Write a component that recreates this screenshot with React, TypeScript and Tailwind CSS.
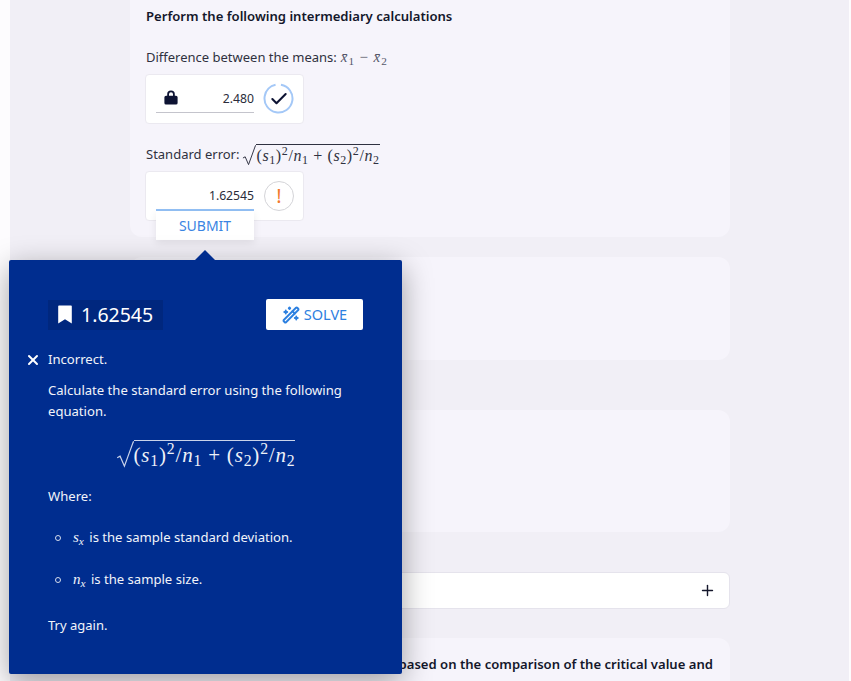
import { Check, Plus, WandSparkles, X } from "lucide-react";

const mathFont = "[font-family:'Liberation_Serif',serif]";

function StdErrorBody() {
  return (
    <span className={mathFont}>
      (<i>s</i><sub>1</sub>)<sup>2</sup>/<i>n</i><sub>1</sub> + (<i>s</i><sub>2</sub>)<sup>2</sup>/<i>n</i><sub>2</sub>
    </span>
  );
}

function StdError({ large }: { large?: boolean }) {
  const stroke = large ? "#c9d3ea" : "#2f3140";
  return (
    <span className="inline-flex items-end">
      <svg width={large ? 18 : 14} height={large ? 27 : 21} viewBox="0 0 15 21" fill="none" className="shrink-0" preserveAspectRatio="none">
        <path d="M1 13 L3.4 11.8 L7 19.6 L14.4 0.6 H15" stroke={stroke} strokeWidth="1" />
      </svg>
      <span
        className={
          large
            ? "border-t border-[#c9d3ea] text-[21px] leading-[26px] tracking-[0.8px] text-[#eef1f8] whitespace-nowrap"
            : "border-t border-[#2f3140] text-[16px] leading-[20px] tracking-[0.6px] text-[#2f3140] whitespace-nowrap"
        }
      >
        <StdErrorBody />
      </span>
    </span>
  );
}

function SolvedInput() {
  return (
    <div className="ml-[-1px] mt-[6px] flex h-[50px] w-[159px] items-start rounded border border-[#ebe9f0] bg-white pl-[10px]">
      <div className="flex h-[38px] w-[98px] items-center justify-between border-b border-[#c4c4cc] pl-[8px] pt-[10px]">
        <svg width="14" height="15" viewBox="0 0 14 16" fill="#0d1333" className="mb-[2px]" preserveAspectRatio="none">
          <path d="M3.2 6V4.4a3.8 3.8 0 0 1 7.6 0V6h1.2A1.6 1.6 0 0 1 13.6 7.6v6.2a1.6 1.6 0 0 1-1.6 1.6H2a1.6 1.6 0 0 1-1.6-1.6V7.6A1.6 1.6 0 0 1 2 6zM5 6h4V4.4a2 2 0 0 0-4 0z" />
        </svg>
        <span className="mt-[1px] text-[12.2px] text-[#2a2c3a]">2.480</span>
      </div>
      <div className="ml-[9px] mt-[8px] flex h-[31px] w-[31px] items-center justify-center">
        <svg width="31" height="31" viewBox="0 0 31 31" fill="none" className="absolute">
          <circle cx="15.5" cy="15.5" r="14" stroke="#a4c8f7" strokeWidth="2" strokeDasharray="82 6" transform="rotate(-80 15.5 15.5)" />
        </svg>
        <Check size={20} strokeWidth={2.5} className="text-[#0d1333]" />
      </div>
    </div>
  );
}

function ActiveInput() {
  return (
    <div className="ml-[-1px] mt-[5px] flex h-[50px] w-[159px] items-start rounded border border-[#ebe9f0] bg-white pl-[10px]">
      <div className="flex h-[39px] w-[98px] items-center justify-end border-b-2 border-[#93c0f5] pt-[11px]">
        <span className="text-[12.2px] text-[#2a2c3a]">1.62545</span>
      </div>
      <div className="ml-[10px] mt-[9px] flex h-[30px] w-[30px] items-center justify-center rounded-full border border-[#d4d4d8]">
        <span className="text-[20px] leading-none text-[#f2792b]">!</span>
      </div>
    </div>
  );
}

function Popover() {
  return (
    <div className="absolute left-[9px] top-[260px] h-[414px] w-[393px] rounded-[2px] bg-[#002d8f] text-[13.1px] text-[#f2f4fa] shadow-[0_8px_30px_rgba(0,0,0,0.36)]">
      <div className="absolute left-[186px] top-[-10px] h-0 w-0 border-x-[10px] border-b-[10px] border-x-transparent border-b-[#002d8f]" />
      <div className="ml-[39px] mr-[39px] mt-[39px] flex items-center justify-between">
        <div className="flex h-[30px] w-[115px] items-center gap-[9px] bg-[#00277e] pl-[10px]">
          <svg width="14" height="19" viewBox="0 0 14 19" fill="white">
            <path d="M1 0.5h12a.8.8 0 0 1 .8.8V18.5L7 14.2 0.2 18.5V1.3A.8.8 0 0 1 1 .5z" />
          </svg>
          <span className="text-[19.5px] leading-none text-white">1.62545</span>
        </div>
        <button className="flex h-[31px] w-[97px] items-center justify-center gap-[4px] rounded-[2px] bg-white text-[14.5px] text-[#2d80e0]">
          <WandSparkles size={18} strokeWidth={2.5} />
          SOLVE
        </button>
      </div>
      <div className="mt-[20px] flex h-[20px] items-center pl-[16px]">
        <X size={16} strokeWidth={3} className="text-white" />
        <span className="ml-[7px]">Incorrect.</span>
      </div>
      <p className="mt-[10px] w-[310px] pl-[39px] leading-[21px] box-content">
        Calculate the standard error using the following equation.
      </p>
      <div className="mt-[18px] flex justify-center">
        <StdError large />
      </div>
      <p className="mt-[18px] pl-[39px] leading-[21px]">Where:</p>
      <ul className="mt-[20px] pl-[46px]">
        <li className="flex h-[21px] items-center">
          <span className="h-[6px] w-[6px] rounded-full border border-[#d6dcec]" />
          <span className="ml-[12px]">
            <i className={`${mathFont} mr-[2px] text-[15px]`}>s<sub>x</sub></i> is the sample standard deviation.
          </span>
        </li>
        <li className="mt-[21px] flex h-[21px] items-center">
          <span className="h-[6px] w-[6px] rounded-full border border-[#d6dcec]" />
          <span className="ml-[12px]">
            <i className={`${mathFont} mr-[2px] text-[15px]`}>n<sub>x</sub></i> is the sample size.
          </span>
        </li>
      </ul>
      <p className="mt-[25px] pl-[39px] text-[13px] leading-[21px]">Try again.</p>
    </div>
  );
}

export default function App() {
  return (
    <div className="relative h-[681px] w-[851px] overflow-hidden bg-[#fdfcfe] font-['Noto_Sans',sans-serif] text-[#14172b]">
      <div className="ml-[10px] mr-[2px] h-[681px] bg-[#f1eff6] pl-[120px]">
        <div className="w-[600px]">
          {/* Intermediary calculations */}
          <section className="h-[237px] rounded-b-xl bg-[#f6f4fb] pl-[16px] pt-[7px]">
            <h2 className="text-[13.1px] font-semibold leading-[19px]">Perform the following intermediary calculations</h2>
            <div className="mt-[21px] flex h-[21px] items-center gap-[4px] text-[13px] text-[#2f3140]">
              Difference between the means:
              <span className={`${mathFont} text-[15px] tracking-[0.9px] text-[#55576a]`}>
                <i>x̄</i><sub>1</sub> − <i>x̄</i><sub>2</sub>
              </span>
            </div>
            <SolvedInput />
            <div className="mt-[18px] flex h-[24px] items-end gap-[3px] text-[13px] text-[#2f3140]">
              <span className="mb-[2px]">Standard error:</span>
              <StdError />
            </div>
            <ActiveInput />
          </section>

          <section className="mt-[20px] h-[103px] rounded-xl bg-[#f6f4fb]" />
          <section className="mt-[50px] h-[122px] rounded-xl bg-[#f6f4fb]" />

          <div className="mt-[40px] flex h-[37px] items-center justify-end rounded-md border border-[#e5e3ec] bg-white pr-[13px]">
            <Plus size={17} strokeWidth={2} className="text-[#14172b]" />
          </div>

          <section className="mt-[29px] h-[60px] rounded-t-xl bg-[#f6f4fb] pr-[17px] pt-[16px] text-right">
            <p className="text-[13.1px] font-semibold leading-[20px]">based on the comparison of the critical value and</p>
          </section>
        </div>
      </div>

      {/* Submit drops over the card below the active input */}
      <button className="absolute left-[156px] top-[211px] h-[29px] w-[98px] bg-white text-[14px] text-[#3a84e2] shadow-[0_3px_8px_rgba(0,0,0,0.08)]">
        SUBMIT
      </button>

      <Popover />
    </div>
  );
}
